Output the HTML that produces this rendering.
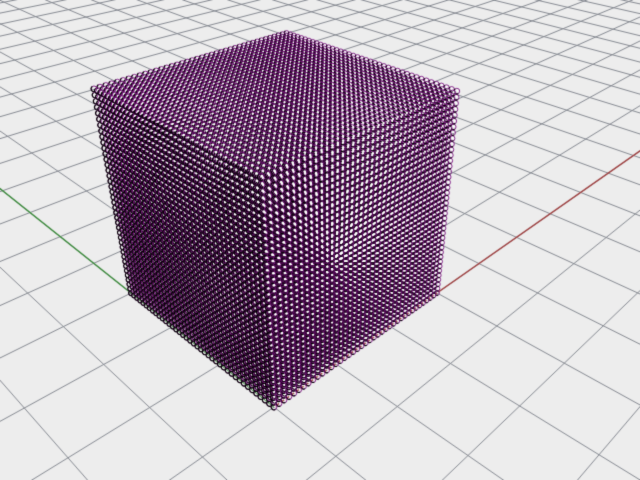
<!DOCTYPE html>
<html><head><meta charset="utf-8">
<style>
html,body{margin:0;padding:0;background:#ececec;width:640px;height:480px;overflow:hidden}
#fb{position:absolute;left:0;top:0}
#c{position:absolute;left:0;top:0}
</style></head>
<body>
<svg id="fb" width="640" height="480"><rect width="640" height="480" fill="#ececec"/>
<polygon points="94,90 290,33 457,90 437,293 274,407 131,293" fill="#5a2260"/></svg>
<canvas id="c" width="640" height="480"></canvas>
<script>
var cv=document.getElementById('c'),ctx=cv.getContext('2d');
ctx.fillStyle='#ededed';ctx.fillRect(0,0,640,480);
function P(u,v,h){
  var x=274-115.8*u+259.0*v-62.6*h;
  var y=407-53.1*u-49.65*v-263.5*h;
  var w=1+0.2075*u+0.2197*v-0.19*h;
  return [x/w,y/w,w];
}
var a=0.2075,b=0.2197,E=40;
ctx.strokeStyle='#868a92';ctx.lineWidth=1;
function seg(p,q){ctx.beginPath();ctx.moveTo(p[0],p[1]);ctx.lineTo(q[0],q[1]);ctx.stroke();}
for(var k=-120;k<=120;k++){
  var c=k/3;
  var vmin=Math.max(-E,(0.05-1-a*c)/b);
  if(vmin<E) seg(P(c,vmin,0),P(c,E,0));
  var umin=Math.max(-E,(0.05-1-b*c)/a);
  if(umin<E) seg(P(umin,c,0),P(E,c,0));
}
ctx.lineWidth=1.4;
ctx.strokeStyle='#3a8a3a';seg(P(0,0,0),P(E,0,0));
ctx.strokeStyle='#a04040';seg(P(0,0,0),P(0,E,0));
var N=40,pts=[];
for(var i=0;i<N;i++)for(var j=0;j<N;j++)for(var l=0;l<N;l++){
  pts.push(P(i/(N-1),j/(N-1),l/(N-1)));
}
pts.sort(function(p,q){return q[2]-p[2];});
for(var n=0;n<pts.length;n++){
  var p=pts[n],r=2.9/p[2];
  ctx.beginPath();ctx.arc(p[0]+r*0.25,p[1]-r*0.25,r*0.4,0,2*Math.PI);
  ctx.fillStyle='#ffffff';ctx.fill();
  ctx.beginPath();ctx.arc(p[0],p[1],r,0,2*Math.PI);
  ctx.lineWidth=0.9;ctx.strokeStyle='#7a1080';ctx.stroke();
  ctx.beginPath();ctx.arc(p[0],p[1],r,0.35*Math.PI,1.3*Math.PI);
  ctx.lineWidth=1.1;ctx.strokeStyle='#000';ctx.stroke();
}
document.getElementById('fb').style.display='none';
</script>
</body></html>
